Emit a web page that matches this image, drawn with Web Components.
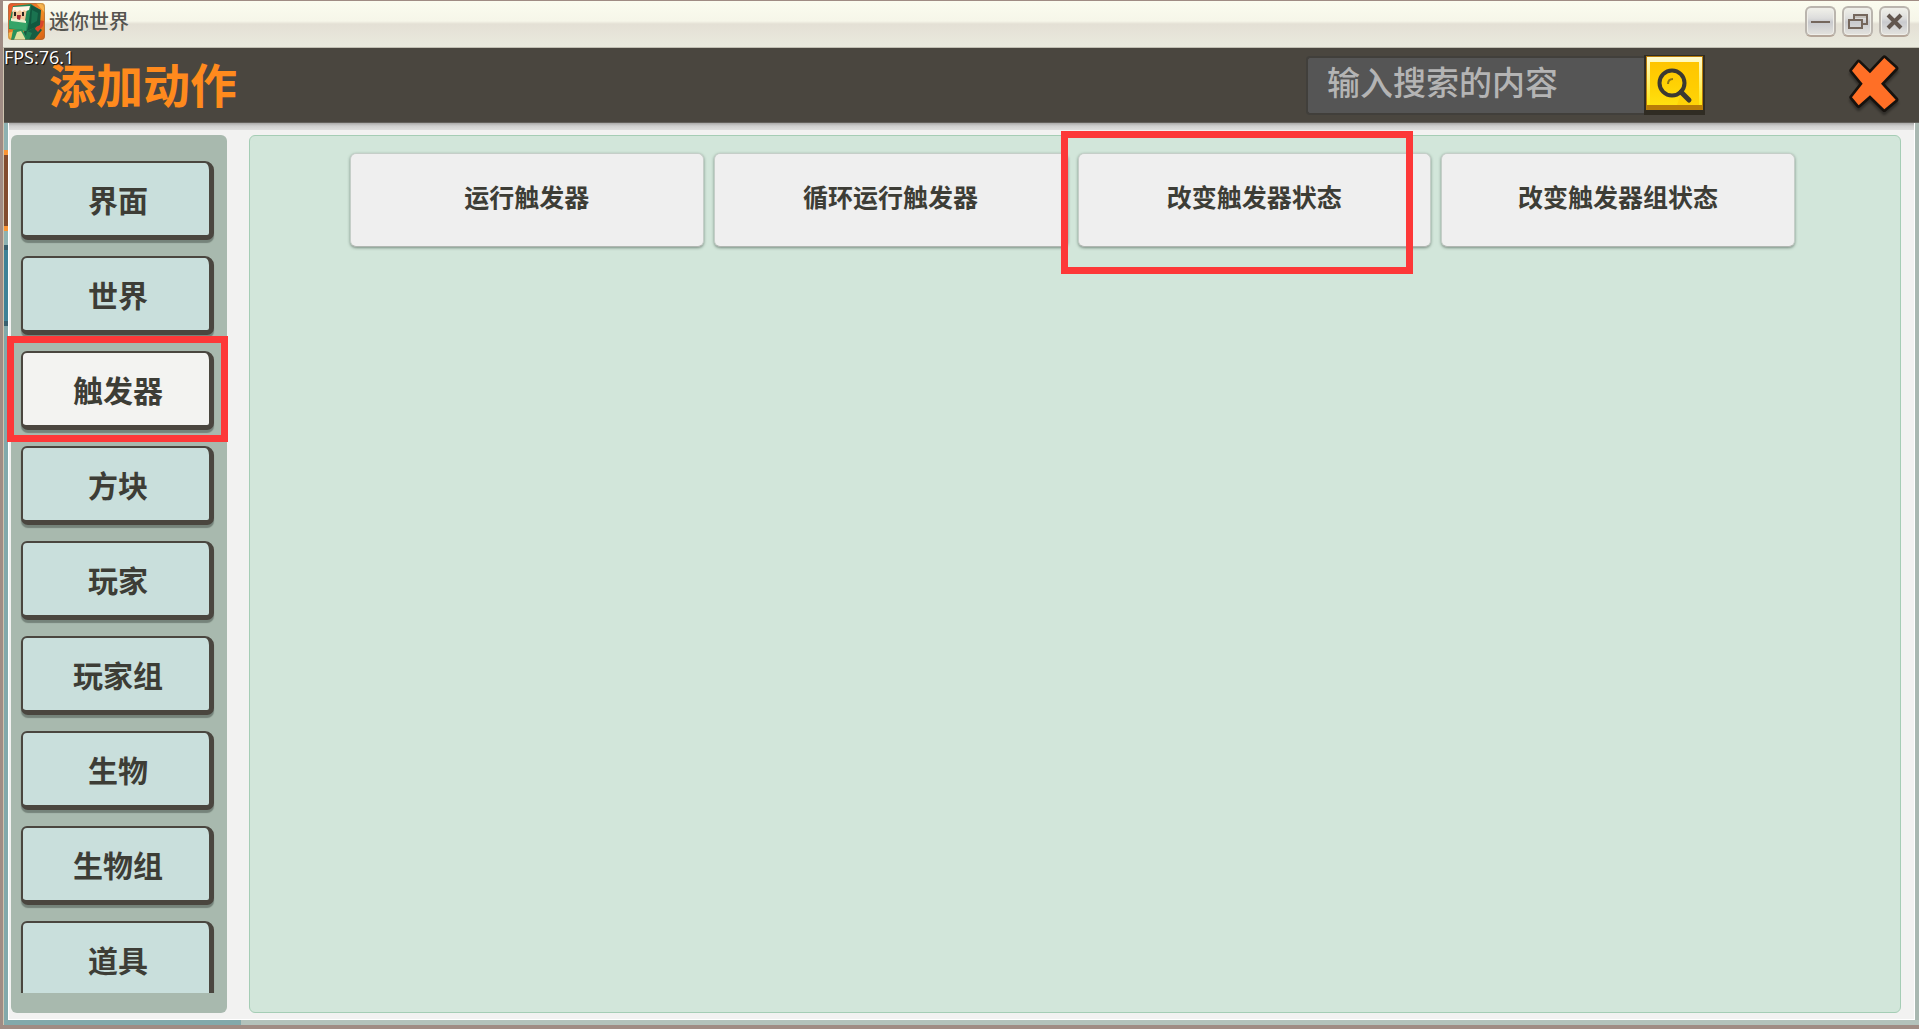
<!DOCTYPE html>
<html lang="zh-CN">
<head>
<meta charset="utf-8">
<title>迷你世界</title>
<style>
  html, body {
    margin: 0;
    height: 100%;
    overflow: hidden;
  }
  body {
    font-family: "Noto Sans CJK SC", sans-serif;
    color: #3d3d36;
    --dark: #4a463f;
    --mark: #fd3838;
  }
</style>
</head>
<body>
<game-window caption="迷你世界">
  <action-header slot="header" heading="添加动作" fps="76.1" hint="输入搜索的内容"></action-header>
  <category-list slot="side">
    <category-button>界面</category-button>
    <category-button>世界</category-button>
    <category-button selected>触发器<mark-frame slot="mark" class="category"></mark-frame></category-button>
    <category-button>方块</category-button>
    <category-button>玩家</category-button>
    <category-button>玩家组</category-button>
    <category-button>生物</category-button>
    <category-button>生物组</category-button>
    <category-button>道具</category-button>
  </category-list>
  <action-grid>
    <action-card>运行触发器</action-card>
    <action-card>循环运行触发器</action-card>
    <action-card>改变触发器状态<mark-frame slot="mark" class="action"></mark-frame></action-card>
    <action-card>改变触发器组状态</action-card>
  </action-grid>
</game-window>

<script>
function define(name, html, setup) {
  const template = document.createElement('template');
  template.innerHTML = html;
  customElements.define(name, class extends HTMLElement {
    constructor() {
      super();
      this.attachShadow({ mode: 'open' });
      this.shadowRoot.appendChild(template.content.cloneNode(true));
    }

    connectedCallback() {
      if (setup) setup(this, this.shadowRoot);
    }
  });
}

define('mark-frame', `
  <style>
    :host {
      position: absolute;
      z-index: 5;
      border: 7px solid var(--mark);
      pointer-events: none;
    }
    :host(.category) { inset: -15px -14px -9px; }
    :host(.action) { inset: -22px 18px -27px -17px; }
  </style>
`);

define('title-button', `
  <style>
    :host { display: block; }
    button {
      display: grid;
      place-items: center;
      width: 31px;
      height: 31px;
      padding: 0;
      border: 2px solid #bab5ae;
      border-bottom-color: #b5a699;
      border-radius: 6px;
      background: linear-gradient(#f1f1ea 0%, #dddddc 38%, #c9cace 52%, #e4e3de 100%);
      box-shadow: inset 0 0 0 1px #efeee9;
    }
    svg { display: block; fill: none; stroke: #75675d; }
  </style>
  <button type="button"><svg width="21" height="21" viewBox="0 0 21 21"></svg></button>
`, (el, root) => {
  const shapes = {
    minimize: '<path d="M1 11h19" stroke-width="2"/>',
    restore: '<path d="M7 8V4h13v9h-4" stroke-width="2"/><path d="M8 6h11" stroke-width="1" stroke="#aaa198"/><rect x="2" y="9" width="13" height="8" stroke-width="2"/>',
    close: '<path d="M4 4l13 13M17 4L4 17" stroke-width="4" stroke="#62564e"/>'
  };
  const labels = { minimize: '最小化', restore: '还原', close: '关闭' };
  const kind = el.getAttribute('kind');
  root.querySelector('svg').innerHTML = shapes[kind];
  root.querySelector('button').setAttribute('aria-label', labels[kind]);
});

define('app-logo', `
  <style>
    :host { display: block; }
    svg { display: block; }
  </style>
  <svg width="37" height="37" viewBox="0 0 37 37">
    <defs>
      <clipPath id="c"><rect width="37" height="37" rx="4"/></clipPath>
      <linearGradient id="g" x2="1" y2="1"><stop stop-color="#e9542b"/><stop offset=".6" stop-color="#ef8a25"/><stop offset="1" stop-color="#d95f12"/></linearGradient>
    </defs>
    <g clip-path="url(#c)">
      <rect width="37" height="37" fill="url(#g)"/>
      <path d="M28 0l9 10V0zM0 30l6-2-3 9H0z" fill="#f8b44c"/>
      <path d="M17 25l12-2 5 4-8 10H14z" fill="#175d43"/>
      <path d="M31 17l5 1-1 5-5 6-3-3z" fill="#d9452a"/>
      <path d="M5 3l18-2 9 6-1 15-11 6-19-2 1-10z" fill="#1f8a58"/>
      <path d="M23 2l10 5-1 15-13 6 2-10z" fill="#12583f"/>
      <path d="M24 7l6 3-1 8-6 3z" fill="#1a7350"/>
      <path d="M1 17l18 3-1 8-17-3z" fill="#35a468"/>
      <path d="M5 6l14-1-2 13-13-2z" fill="#f0c79a"/>
      <path d="M5 4l17-1-1 4-3 1-2-1-2 2-2-2-3 2-2-2-3 2z" fill="#fff5e4"/>
      <path d="M3 15l3 1 2-1 3 2 3-1 4 2v2L3 18z" fill="#e9efcf"/>
      <path d="M6 9h2v4H6zM14 9h2v4h-2z" fill="#2b251f"/>
      <path d="M9 12h4l-1 5-3-1z" fill="#a52c34"/>
      <path d="M5 27l9-1 6 11H3z" fill="#28925b"/>
      <path d="M9 29l4-1 5 9H6z" fill="#dfe0a0"/>
      <path d="M19 28l5 2-3 7h-4z" fill="#1e8154"/>
    </g>
    <rect x=".5" y=".5" width="36" height="36" rx="4" fill="none" stroke="#8a7250" stroke-opacity=".5"/>
  </svg>
`);

define('game-window', `
  <style>
    :host {
      display: flex;
      flex-direction: column;
      height: 100vh;
      box-sizing: border-box;
      border: solid #a08c84;
      border-width: 1px 0 4px 3px;
      background: #a9b8b1;
    }
    .title {
      display: flex;
      align-items: center;
      gap: 6px;
      flex: none;
      height: 47px;
      box-sizing: border-box;
      padding: 0 9px 6px 5px;
      border-bottom: 1px solid #c1bfb3;
      background: linear-gradient(#fbfcef 0, #f6f6e9 20px, #e4e0d5 23px, #eaeade 46px);
    }
    h1 {
      flex: 1;
      margin: 0 0 0 -2px;
      font-size: 20px;
      line-height: 36px;
      font-weight: 500;
      color: #55544f;
    }
    .stage {
      display: flex;
      flex-direction: column;
      flex: 1;
      min-height: 0;
      border-left: 1px solid #cfc4af;
      background:
        linear-gradient(#8eb2b2 0 102px, #fa9434 102px 107px, #824c2e 107px 178px, #fa9434 178px 183px, #8eb2b2 183px 197px, #39606f 197px 202px, #3f8297 202px 273px, #39606f 273px 278px, #82a9ab 278px) 0 0 / 4px 100% no-repeat,
        linear-gradient(90deg, #82a9ab 237px, #b3c2bb 237px) 0 100% / 100% 5px no-repeat,
        #a9b8b1;
    }
    main {
      display: flex;
      gap: 22px;
      flex: 1;
      min-height: 0;
      box-sizing: border-box;
      margin: 0 4px 5px;
      padding: 12px 13px 6px 2px;
      border: solid #ffffff;
      border-width: 0 1px 1px;
      background: linear-gradient(#aaa9a8 0, #cfcfce 3px, #dededd 7px, #f2f2f1 7px);
    }
    ::slotted(action-grid) { flex: 1; }
  </style>
  <header class="title">
    <app-logo></app-logo>
    <h1></h1>
    <title-button kind="minimize"></title-button>
    <title-button kind="restore"></title-button>
    <title-button kind="close"></title-button>
  </header>
  <div class="stage">
    <slot name="header"></slot>
    <main>
      <slot name="side"></slot>
      <slot></slot>
    </main>
  </div>
`, (el, root) => {
  root.querySelector('h1').textContent = el.getAttribute('caption');
});

define('action-header', `
  <style>
    :host {
      position: relative;
      display: flex;
      align-items: center;
      flex: none;
      height: 75px;
      box-sizing: border-box;
      padding: 0 20px 0 45px;
      border-bottom: 1px solid #64615c;
      background: var(--dark);
    }
    .fps {
      position: absolute;
      left: 0;
      top: 0;
      font: 18px/18px "Open Sans", sans-serif;
      color: #fff;
      text-shadow: 1px 1px 1px #000;
    }
    h2 {
      flex: 1;
      margin: 0;
      padding-bottom: 4px;
      font-size: 47px;
      line-height: 68px;
      font-weight: 700;
      color: #ff8a1d;
    }
    close-cross {
      margin-left: 144px;
      padding-bottom: 4px;
    }
  </style>
  <h2></h2>
  <span class="fps"></span>
  <search-box></search-box>
  <close-cross></close-cross>
`, (el, root) => {
  root.querySelector('h2').textContent = el.getAttribute('heading');
  root.querySelector('.fps').textContent = 'FPS:' + el.getAttribute('fps');
  root.querySelector('search-box').setAttribute('hint', el.getAttribute('hint'));
});

define('search-box', `
  <style>
    :host {
      display: flex;
      align-items: flex-start;
      height: 60px;
    }
    input {
      width: 338px;
      height: 59px;
      box-sizing: border-box;
      margin: 1px 0 0;
      padding: 0 19px 10px;
      border: 2px solid #413f3b;
      border-right: 0;
      border-radius: 4px 0 0 4px;
      background: #555;
      font: 500 33px/44px "Noto Sans CJK SC", sans-serif;
      color: #b4b4b4;
      outline: none;
    }
    input::placeholder { color: #b4b4b4; opacity: 1; }
    button {
      display: grid;
      place-items: center;
      width: 61px;
      height: 60px;
      margin: 0;
      padding: 0;
      border: solid #302c23;
      border-width: 1px 2px 5px;
      background: none;
    }
    svg { display: block; }
  </style>
  <input type="text" aria-label="搜索">
  <button type="button" aria-label="搜索">
    <svg width="57" height="54" viewBox="0 0 57 54">
      <defs>
        <linearGradient id="y" x2="0" y2="1"><stop stop-color="#ffc400"/><stop offset=".55" stop-color="#ffd204"/><stop offset="1" stop-color="#ffe010"/></linearGradient>
        <linearGradient id="w" x2="0" y2="1"><stop stop-color="#fffbd0"/><stop offset="1" stop-color="#ffe60a"/></linearGradient>
      </defs>
      <rect width="57" height="54" fill="#b87c08"/>
      <rect x="1" y="1" width="55" height="50" fill="url(#w)"/>
      <rect x="4" y="6" width="49" height="43" fill="url(#y)"/>
      <path d="M46 6h7v43H31z" fill="#ffc800" opacity=".5"/>
      <path d="M0 49h57v5H0z" fill="#b87c08"/>
      <circle cx="26" cy="27" r="12.5" fill="none" stroke="#3b3932" stroke-width="4"/>
      <path d="M35 36l8 8" stroke="#3b3932" stroke-width="5" stroke-linecap="round"/>
      <path d="M22 28q0-5 5-5" fill="none" stroke="#8c7514" stroke-width="2"/>
    </svg>
  </button>
`, (el, root) => {
  root.querySelector('input').placeholder = el.getAttribute('hint');
});

define('close-cross', `
  <style>
    :host { display: block; }
    button { display: block; padding: 0; border: 0; background: none; }
    svg { display: block; overflow: visible; filter: drop-shadow(0 3px 1px rgba(0, 0, 0, .35)); }
  </style>
  <button type="button" aria-label="关闭">
    <svg width="50" height="58" viewBox="207 160 150 174">
      <path d="M236 185L270 218L313 172L347 203L303 249L347 297L313 326L270 284L236 314L216 290L248 249L216 210Z" fill="#ff6f26" stroke="#16120e" stroke-width="16" stroke-linejoin="round" paint-order="stroke"/>
    </svg>
  </button>
`);

define('category-list', `
  <style>
    :host {
      flex: none;
      box-sizing: border-box;
      width: 216px;
      padding: 26px 13px 20px 10px;
      border-radius: 6px;
      background: #a8b9ae;
    }
    nav {
      display: flex;
      flex-direction: column;
      gap: 13px;
      height: 100%;
      overflow-x: visible;
      overflow-y: clip;
    }
  </style>
  <nav><slot></slot></nav>
`);

define('category-button', `
  <style>
    :host {
      position: relative;
      display: block;
      flex: none;
      padding-bottom: 3px;
    }
    button {
      display: block;
      width: 100%;
      height: 79px;
      box-sizing: border-box;
      margin: 0;
      padding: 0 0 0 4px;
      border: solid var(--dark);
      border-width: 2px 5px 5px 2px;
      border-radius: 6px 9px 7px 7px;
      background: #c9dfdc;
      box-shadow: 0 3px 1px #75837a;
      font: 700 30px/40px "Noto Sans CJK SC", sans-serif;
      color: #3d3d36;
    }
    :host([selected]) button { background-color: #f3f3f1; }
  </style>
  <button type="button"><slot></slot></button>
  <slot name="mark"></slot>
`);

define('action-grid', `
  <style>
    :host {
      display: block;
      box-sizing: border-box;
      padding: 17px 105px 17px 100px;
      border: 1px solid #a5cdb5;
      border-radius: 6px;
      background: #d2e6da;
    }
    div {
      display: grid;
      grid-template-columns: repeat(4, 1fr);
      gap: 10px;
    }
  </style>
  <div><slot></slot></div>
`);

define('action-card', `
  <style>
    :host { position: relative; display: block; }
    button {
      display: block;
      width: 100%;
      height: 94px;
      padding: 0 0 8px;
      border: 1px solid #c5cec8;
      border-bottom-color: #b0b6b1;
      border-radius: 6px;
      background: #efefef;
      box-shadow: 0 1px 3px rgba(60, 80, 70, .6);
      font: 700 25px/36px "Noto Sans CJK SC", sans-serif;
      color: #3d3d36;
    }
  </style>
  <button type="button"><slot></slot></button>
  <slot name="mark"></slot>
`);
</script>
</body>
</html>
